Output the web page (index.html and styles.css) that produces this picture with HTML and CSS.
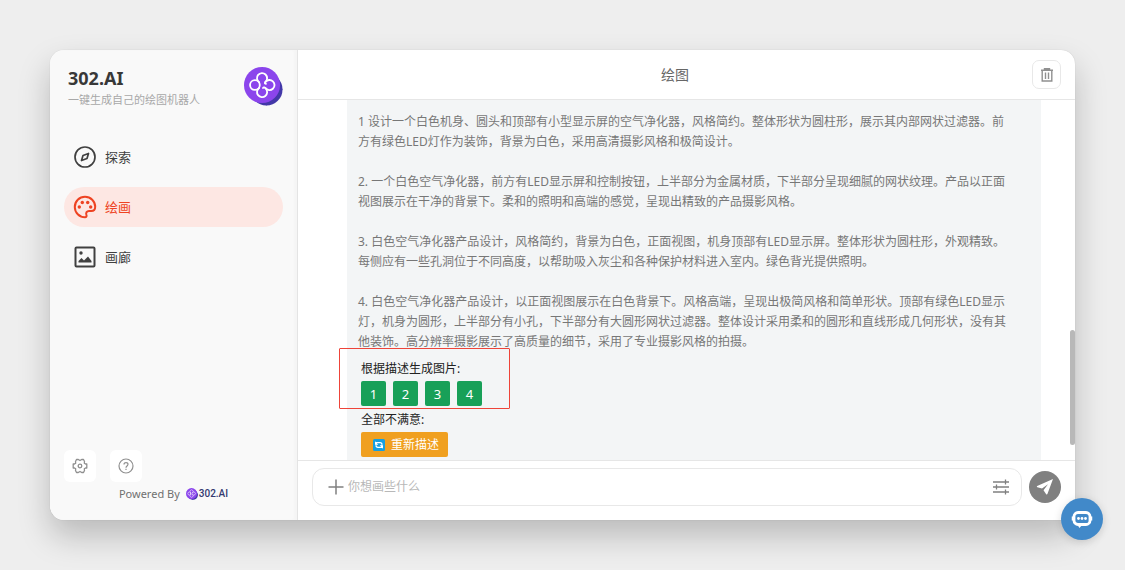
FILE: index.html
```html
<!DOCTYPE html>
<html lang="zh-CN">
<head>
<meta charset="utf-8">
<meta name="viewport" content="width=device-width, initial-scale=1">
<title>302.AI 绘图</title>
<link rel="stylesheet" href="styles.css">
</head>
<body>
<svg class="defs" aria-hidden="true">
  <symbol id="logo" viewBox="0 0 40 40">
    <circle cx="23" cy="23" r="16.5" fill="#4338a8"/>
    <path d="M7 29 23 39.500 39.500 23 32 8z" fill="#4338a8"/>
    <circle cx="18.500" cy="18.500" r="18.500" fill="#8b45ec"/>
    <g fill="none" stroke="#fff" stroke-width="1.900" stroke-linecap="round">
      <circle cx="11.200" cy="18.500" r="5"/>
      <path d="M15.500 15.700A5.200 5.200 0 1 1 22 15.300Q20.500 17 22.500 17.300"/>
      <path d="M22 15.300A5.200 5.200 0 1 1 22 21.700"/>
      <path d="M15.500 21.500A5.200 5.200 0 1 0 22.500 22.300Q20.500 20 19.500 21.500"/>
    </g>
  </symbol>
</svg>
<div class="app">
  <aside class="sidebar">
    <header class="brand">
      <div>
        <h1 class="brand-name">302.AI</h1>
        <p class="brand-tagline">一键生成自己的绘图机器人</p>
      </div>
      <svg class="brand-logo" aria-hidden="true"><use href="#logo"/></svg>
    </header>
    <nav class="nav">
      <a class="nav-item" href="#explore">
        <svg class="nav-icon" viewBox="0 0 24 24" aria-hidden="true"><g fill="none" stroke="currentColor" stroke-width="1.700" stroke-linejoin="round"><circle cx="12" cy="12" r="10"/><path d="M15.500 8.500l-1.500 5-5.500 2 1.500-5z"/></g></svg>
        探索
      </a>
      <a class="nav-item active" href="#draw" aria-current="page">
        <svg class="nav-icon" viewBox="0 0 24 24" aria-hidden="true"><path d="M12 1.800C6.300 1.800 1.800 6.300 1.800 12S6.300 22.200 12 22.200c1.500 0 1.900-1 1.400-2.300-.8-2.300.4-3.900 2.600-3.900h2.200c2.500 0 4-1.700 4-4.200C22.200 6.100 17.700 1.800 12 1.800z" fill="none" stroke="currentColor" stroke-width="2"/><g fill="currentColor"><circle cx="6.300" cy="12" r="1.700"/><circle cx="9.300" cy="7.500" r="1.700"/><circle cx="14.700" cy="7.500" r="1.700"/><circle cx="17.700" cy="12" r="1.700"/></g></svg>
        绘画
      </a>
      <a class="nav-item" href="#gallery">
        <svg class="nav-icon" viewBox="0 0 24 24" aria-hidden="true"><rect x="2.500" y="2.500" width="19" height="19" rx="1" fill="none" stroke="currentColor" stroke-width="2"/><circle cx="8" cy="8" r="1.700" fill="currentColor"/><path d="M5.500 17.500v-1.500l3-3 2.500 2.500 4-4 3.500 4.500v1.500z" fill="currentColor"/></svg>
        画廊
      </a>
    </nav>
    <footer class="side-footer">
      <div class="side-tools">
        <button class="side-button" type="button" aria-label="设置">
          <svg class="small-icon" viewBox="0 0 16 16" fill="none" stroke="currentColor" stroke-width="1.300" stroke-linejoin="round" aria-hidden="true"><path d="M4.500 1.500h1.800L8 2.500l1.700-1h1.800l1 2-.2 1.800L13.500 6h1.300v4h-1.300l-1.200.7.2 1.800-1 2H9.700L8 13.500l-1.700 1H4.500l-1-2 .2-1.800L2.500 10H1.200V6h1.300l1.200-.7-.2-1.800z"/><circle cx="8" cy="8" r="1.800"/></svg>
        </button>
        <button class="side-button" type="button" aria-label="帮助">
          <svg class="small-icon" viewBox="0 0 16 16" fill="none" stroke="currentColor" stroke-width="1.200" aria-hidden="true"><circle cx="8" cy="8" r="7"/><path d="M6 6.500C6 3.800 10 4 10 6.300 10 8 8 7.900 8 9.700"/><path d="M8 10.800v1.300"/></svg>
        </button>
      </div>
      <p class="powered">Powered By
        <a class="powered-link" href="#home"><svg class="mini-logo" aria-hidden="true"><use href="#logo"/></svg>302.AI</a>
      </p>
    </footer>
  </aside>

  <main class="main">
    <header class="topbar">
      <h2 class="topbar-title">绘图</h2>
      <button class="clear-button" type="button" aria-label="清空">
        <svg class="small-icon" viewBox="0 0 16 16" fill="none" stroke="currentColor" stroke-width="1.400" aria-hidden="true"><path d="M2 3.200h12M5.500 3V1.700h5V3M3.200 3.500v10.500h9.600v-10.500M6.500 5.500v6.500M9.500 5.500v6.500"/></svg>
      </button>
    </header>

    <section class="chat">
      <article class="message">
        <p class="message-text">1 设计一个白色机身、圆头和顶部有小型显示屏的空气净化器，风格简约。整体形状为圆柱形，展示其内部网状过滤器。前<br>方有绿色LED灯作为装饰，背景为白色，采用高清摄影风格和极简设计。</p>
        <p class="message-text">2. 一个白色空气净化器，前方有LED显示屏和控制按钮，上半部分为金属材质，下半部分呈现细腻的网状纹理。产品以正面<br>视图展示在干净的背景下。柔和的照明和高端的感觉，呈现出精致的产品摄影风格。</p>
        <p class="message-text">3. 白色空气净化器产品设计，风格简约，背景为白色，正面视图，机身顶部有LED显示屏。整体形状为圆柱形，外观精致。<br>每侧应有一些孔洞位于不同高度，以帮助吸入灰尘和各种保护材料进入室内。绿色背光提供照明。</p>
        <p class="message-text">4. 白色空气净化器产品设计，以正面视图展示在白色背景下。风格高端，呈现出极简风格和简单形状。顶部有绿色LED显示<br>灯，机身为圆形，上半部分有小孔，下半部分有大圆形网状过滤器。整体设计采用柔和的圆形和直线形成几何形状，没有其<br>他装饰。高分辨率摄影展示了高质量的细节，采用了专业摄影风格的拍摄。</p>
        <div class="actions">
          <p class="actions-label">根据描述生成图片:</p>
          <div class="choices">
            <button class="choice" type="button">1</button>
            <button class="choice" type="button">2</button>
            <button class="choice" type="button">3</button>
            <button class="choice" type="button">4</button>
          </div>
          <p class="actions-label">全部不满意:</p>
          <button class="retry" type="button">
            <svg class="retry-icon" viewBox="0 0 14 14" aria-hidden="true"><rect x="1" y="1" width="12" height="12" rx="1.500" fill="#159fe0"/><g fill="none" stroke="#fff" stroke-width="1.300"><path d="M4.200 6.500V4.700h3.800q2 0 2 2M9.800 7.500v1.800H6q-2 0-2-2"/></g><path d="M3 3.300v3.500h3.300zM11 10.700V7.200H7.700z" fill="#fff"/></svg>
            重新描述
          </button>
          <div class="highlight"></div>
        </div>
      </article>
      <div class="scroll-thumb"></div>
    </section>

    <form class="composer">
      <div class="composer-field">
        <button class="icon-button" type="button" aria-label="添加">
          <svg class="field-icon" viewBox="0 0 16 16" fill="none" stroke="currentColor" stroke-width="1.500" aria-hidden="true"><path d="M8 .5v15M.5 8h15"/></svg>
        </button>
        <input class="composer-input" type="text" placeholder="你想画些什么" aria-label="你想画些什么">
        <button class="icon-button" type="button" aria-label="参数">
          <svg class="field-icon" viewBox="0 0 16 16" fill="none" stroke="currentColor" stroke-width="1.300" aria-hidden="true"><path d="M0 3h16M0 8h16M0 13h16M12.500 .5v5M3.500 5.500v5M12.500 10.500v5"/></svg>
        </button>
      </div>
      <button class="send" type="button" aria-label="发送">
        <svg class="send-icon" viewBox="0 0 18 18" aria-hidden="true"><path d="M17 1 1.200 8q-1 .7.200 1.300l4.600 1.200L12 6.200l-4.500 6 2.700 4q.8.800 1.300-.5z" fill="#fff"/></svg>
      </button>
    </form>
  </main>
</div>
<button class="support" type="button" aria-label="在线客服">
  <svg class="support-icon" viewBox="0 0 22 20" aria-hidden="true"><rect x="3" y="3.500" width="16" height="12" rx="4" fill="none" stroke="#fff" stroke-width="2.800"/><path d="M1.500 7.500v4M20.500 7.500v4" stroke="#fff" stroke-width="1.500"/><path d="M6.500 16 8.500 19l2.500-3z" fill="#fff"/><g fill="#fff"><circle cx="7.500" cy="9.500" r="1.400"/><circle cx="11" cy="9.500" r="1.400"/><circle cx="14.500" cy="9.500" r="1.400"/></g></svg>
</button>
</body>
</html>
```

FILE: styles.css
```css
* {
  box-sizing: border-box;
}

body {
  margin: 0;
  height: 100vh;
  padding: 50px;
  background: #eeeeee;
  color: #333333;
  font: 12px/20px "Noto Sans", "Noto Sans CJK SC", sans-serif;
}

h1, h2, p {
  margin: 0;
}

button {
  margin: 0;
  padding: 0;
  border: 0;
  background: none;
  color: inherit;
  font: inherit;
  cursor: pointer;
}

a {
  color: inherit;
  text-decoration: none;
}

svg {
  display: block;
  flex: none;
}

.defs {
  position: absolute;
  width: 0;
  height: 0;
}

.app {
  display: flex;
  height: 100%;
  border-radius: 14px;
  overflow: hidden;
  background: #ffffff;
  box-shadow: 0 0 1px rgba(0, 0, 0, 0.2), 0 16px 32px rgba(0, 0, 0, 0.22);
}

/* Sidebar */
.sidebar {
  display: flex;
  flex-direction: column;
  flex: none;
  width: 248px;
  padding: 16px 14px;
  background: #f9f9f9;
  border-right: 1px solid #e4e4e4;
  box-shadow: inset -3px 0 3px rgba(0, 0, 0, 0.02);
}

.brand {
  display: flex;
  align-items: flex-end;
  justify-content: space-between;
  padding-left: 4px;
}

.brand-name {
  font-size: 18px;
  line-height: 24px;
  color: #383838;
}

.brand-tagline {
  font-size: 11px;
  color: #a8a8a8;
}

.brand-logo {
  width: 39px;
  height: 39px;
  margin-bottom: 4px;
}

.nav {
  display: flex;
  flex-direction: column;
  gap: 10px;
  margin-top: 27px;
}

.nav-item {
  display: flex;
  align-items: center;
  gap: 8px;
  height: 40px;
  padding: 0 9px;
  border-radius: 20px;
  color: #404040;
  font-size: 13px;
}

.nav-item.active {
  background: #fde7e3;
  color: #ee4322;
}

.nav-icon {
  width: 24px;
  height: 24px;
}

.side-footer {
  margin-top: auto;
}

.side-tools {
  display: flex;
  gap: 14px;
}

.side-button {
  display: grid;
  place-items: center;
  width: 32px;
  height: 32px;
  border-radius: 6px;
  background: #ffffff;
  color: #909090;
}

.small-icon {
  width: 16px;
  height: 16px;
}

.powered {
  display: flex;
  justify-content: center;
  gap: 6px;
  padding-top: 2px;
  font-size: 11px;
  color: #707070;
}

.powered-link {
  display: flex;
  align-items: center;
  gap: 1px;
  color: #333a70;
  font: 500 10px/20px Roboto, sans-serif;
}

.mini-logo {
  width: 12px;
  height: 12px;
}

/* Conversation */
.main {
  display: flex;
  flex-direction: column;
  flex: 1;
  min-width: 0;
}

.topbar {
  display: flex;
  align-items: center;
  height: 50px;
  padding: 0 14px 0 20px;
  border-bottom: 1px solid #e6e6e6;
}

.topbar-title {
  flex: 1;
  text-align: center;
  font-size: 14px;
  font-weight: 400;
  color: #666666;
}

.clear-button {
  display: grid;
  place-items: center;
  width: 29px;
  height: 29px;
  border: 1px solid #e8e8e8;
  border-radius: 7px;
  color: #909090;
}

.chat {
  position: relative;
  flex: 1;
  min-height: 0;
  overflow: hidden;
  padding: 0 34px 0 49px;
}

.message {
  min-height: 100%;
  padding: 12px 11px;
  background: #f3f5f6;
  color: #777777;
}

.message-text {
  white-space: nowrap;
}

.message-text + .message-text {
  margin-top: 20px;
}

.actions {
  position: relative;
  padding: 7px 3px;
  color: #222222;
}

.actions-label {
  line-height: 20px;
}

.choices {
  display: flex;
  gap: 7px;
  padding: 2px 0 4px;
}

.choice {
  width: 25px;
  height: 25px;
  border-radius: 2px;
  background: #18a058;
  color: #ffffff;
  font-size: 13px;
}

.retry {
  display: flex;
  align-items: center;
  gap: 5px;
  height: 25px;
  margin-top: 2px;
  padding: 0 9px 0 11px;
  border-radius: 2px;
  background: #f0a020;
  color: #ffffff;
  font-size: 12px;
}

.retry-icon {
  width: 14px;
  height: 14px;
}

.highlight {
  position: absolute;
  top: -4px;
  left: -19px;
  width: 171px;
  height: 61px;
  border: 1px solid #ee4439;
  border-radius: 1px;
  pointer-events: none;
}

.scroll-thumb {
  position: absolute;
  right: 0;
  bottom: 15px;
  width: 5px;
  height: 115px;
  border-radius: 3px;
  background: #b8b8b8;
}

.composer {
  display: flex;
  align-items: center;
  gap: 7px;
  padding: 7px 14px 14px;
  border-top: 1px solid #e6e6e6;
}

.composer-field {
  display: flex;
  align-items: center;
  flex: 1;
  min-width: 0;
  gap: 4px;
  height: 38px;
  padding: 0 12px 0 15px;
  border: 1px solid #e8e8e8;
  border-radius: 12px;
}

.composer-input {
  flex: 1;
  min-width: 0;
  padding: 0;
  border: 0;
  outline: 0;
  background: none;
  color: #333333;
  font: inherit;
}

.composer-input::placeholder {
  color: #b8b8b8;
}

.icon-button {
  color: #808080;
}

.field-icon {
  width: 16px;
  height: 16px;
}

.send {
  display: grid;
  place-items: center;
  width: 32px;
  height: 32px;
  border-radius: 50%;
  background: #808080;
}

.send-icon {
  width: 18px;
  height: 18px;
}

.support {
  position: fixed;
  right: 22px;
  bottom: 30px;
  display: grid;
  place-items: center;
  width: 42px;
  height: 42px;
  border-radius: 50%;
  background: #4189c9;
  box-shadow: 0 2px 8px rgba(0, 0, 0, 0.15);
}

.support-icon {
  width: 22px;
  height: 20px;
}
```
